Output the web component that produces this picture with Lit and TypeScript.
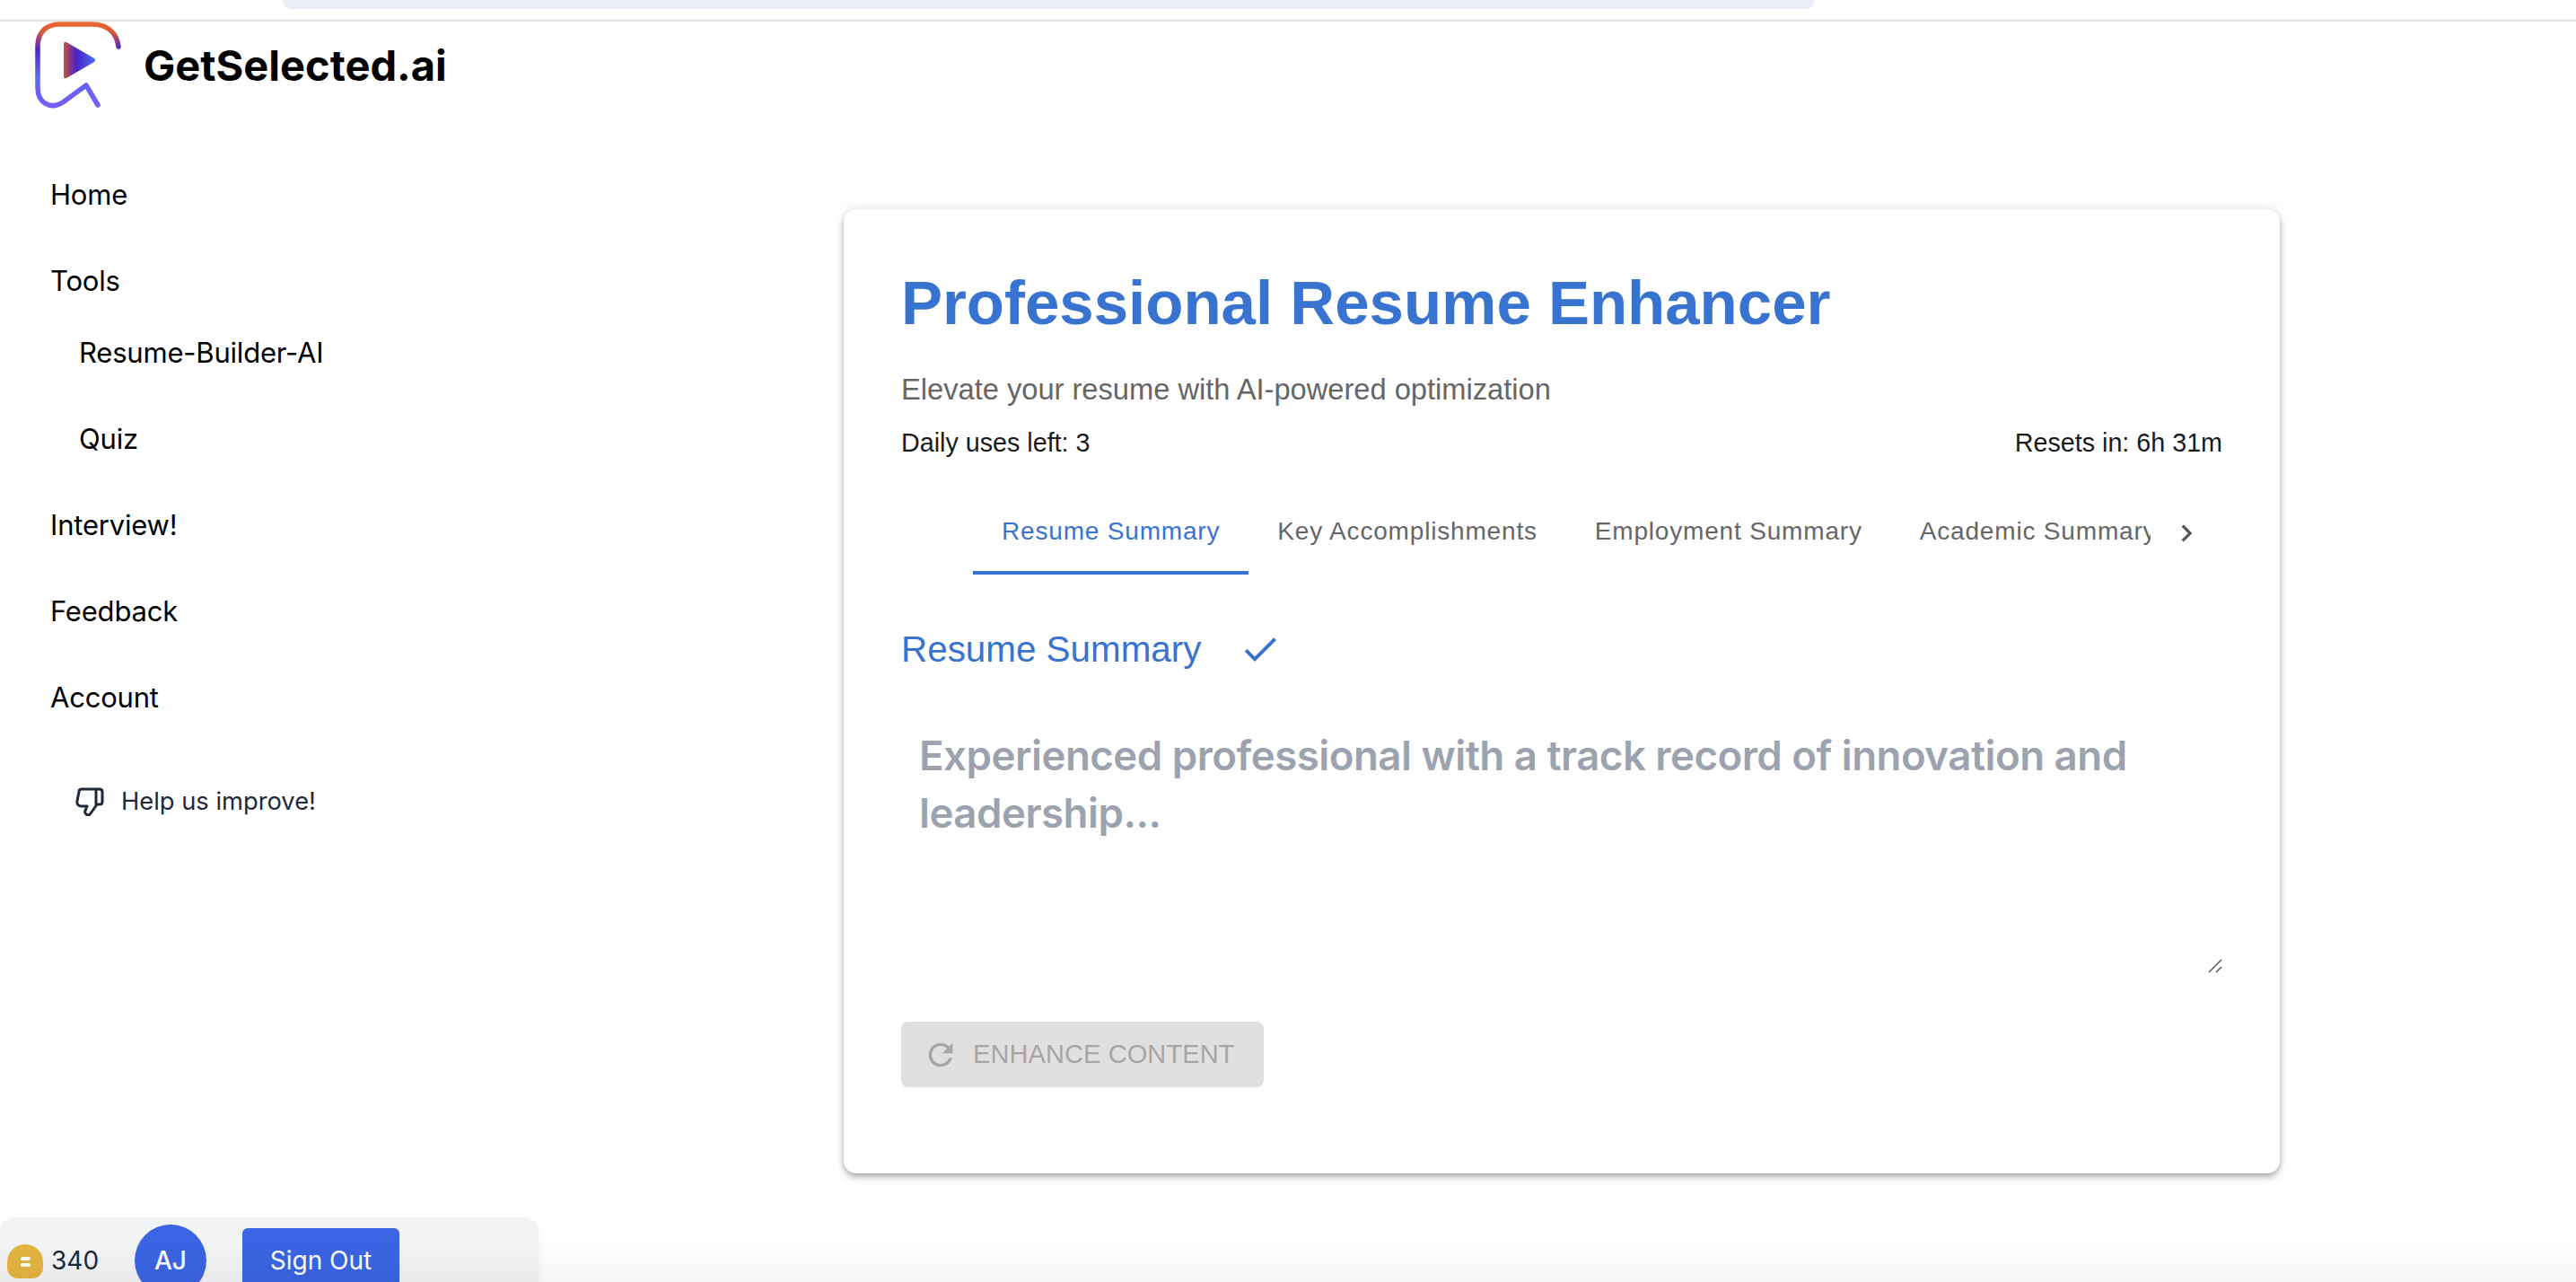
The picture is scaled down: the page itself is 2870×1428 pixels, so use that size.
import { LitElement, html, css } from "lit";
import { customElement } from "lit/decorators.js";

@customElement("app-root")
export class AppRoot extends LitElement {
  static styles = css`
    :host { display: block; width: 2870px; height: 1428px; overflow: hidden; background: #fff; position: relative; font-family: Inter, "Liberation Sans", sans-serif; }
    .fade { position: absolute; left: 0; right: 0; bottom: 0; height: 46px; pointer-events: none; background: linear-gradient(rgba(0,0,0,0), rgba(0,0,0,.04)); }
    .chrome { height: 22px; border-bottom: 2px solid #e2e2e2; display: flex; padding-left: 315px; }
    .pill { width: 1707px; height: 10px; background: #e9edf6; border-radius: 0 0 28px 28px; }
    .page { display: grid; grid-template-columns: 940px 1600px; height: 1404px; }
    .side { display: flex; flex-direction: column; min-height: 0; }
    .brand { display: flex; align-items: center; height: 97px; padding-left: 39px; gap: 23px; }
    .brand svg { display: block; width: 98px; height: 97px; flex: none; }
    .brand b { font-size: 47px; font-weight: 700; color: #000; }
    .nav { display: flex; flex-direction: column; padding: 76px 0 0 56px; }
    .nav a { font-size: 31px; letter-spacing: -0.2px; line-height: 40px; color: #000; height: 96px; display: block; }
    .nav a.sub { margin-left: 32px; }
    .nav a.t { height: 80px; }
    .help { display: flex; align-items: center; gap: 19px; margin: 20px 0 0 84px; font-size: 27.3px; color: #1f2937; line-height: 40px; }
    .help svg { width: 32px; height: 32px; }
    .bar { margin-top: auto; width: 600px; height: 72px; flex: none; background: #f2f3f5; border-radius: 16px 16px 0 0; box-shadow: 0 4px 10px rgba(0,0,0,.05); display: flex; align-items: flex-start; box-sizing: border-box; }
    .coin { width: 40px; height: 38px; border-radius: 20px 20px 12px 12px; background: #e3b440; margin: 30px 0 0 8px; display: flex; flex-direction: column; gap: 3px; align-items: center; justify-content: center; flex: none; }
    .coin i { display: block; width: 11px; height: 4px; background: #fff; border-radius: 2px; }
    .num { font-size: 28px; color: #1f2937; margin: 28px 0 0 9px; line-height: 40px; width: 52px; flex: none; }
    .av { width: 80px; height: 80px; border-radius: 50%; background: #3a64e2; color: #fff; font-size: 28px; font-weight: 500; display: flex; align-items: center; justify-content: center; margin: 8px 0 0 41px; flex: none; }
    .out { width: 175px; height: 72px; background: #3a64e2; color: #fff; border-radius: 6px; font-size: 28px; display: flex; align-items: center; justify-content: center; margin: 12px 0 0 40px; flex: none; }
    .card { margin-top: 209px; width: 1600px; height: 1074px; box-sizing: border-box; padding: 64px; border-radius: 14px; background: #fff; box-shadow: 0 3px 5px -1px rgba(0,0,0,.2), 0 5px 8px rgba(0,0,0,.14), 0 1px 14px rgba(0,0,0,.12); font-family: "Liberation Sans", Arial, sans-serif; display: flex; flex-direction: column; }
    h1 { margin: 1px 0 0; font-size: 69px; line-height: 80px; color: #3873cf; font-weight: 700; }
    .subt { font-size: 32.65px; line-height: 44px; color: #666; margin-top: 34px; }
    .uses { display: flex; justify-content: space-between; font-size: 28.7px; line-height: 36px; color: #1a1a1a; margin-top: 19px; }
    .tabs { display: flex; align-items: stretch; height: 94px; margin: 37px 0 0 80px; }
    .tab { padding: 0 32px; height: 92px; border-bottom: 4px solid transparent; display: flex; align-items: center; font-size: 28px; letter-spacing: 0.82px; color: #666; white-space: nowrap; box-sizing: border-box; }
    .tab.on { color: #3873cf; border-color: #3873cf; }
    .viewport { display: flex; overflow: hidden; width: 1312px; flex: none; }
    .more { width: 80px; height: 92px; display: flex; align-items: center; justify-content: center; flex: none; }
    .more svg { width: 38px; height: 38px; }
    .sec { display: flex; align-items: center; gap: 42px; font-size: 40.4px; color: #3873cf; margin-top: 57px; height: 48px; }
    .sec svg { width: 48px; height: 48px; }
    .ta { position: relative; height: 286px; margin-top: 51px; padding: 12px 20px; font-family: Inter, sans-serif; font-weight: 600; font-size: 45.6px; letter-spacing: -0.5px; line-height: 64px; color: #9ca3af; box-sizing: border-box; }
    .grip { position: absolute; right: 0; bottom: 0; width: 16px; height: 16px; }
    .btn { display: flex; align-items: center; width: 404px; height: 73px; box-sizing: border-box; margin-top: 54px; padding-left: 24px; background: #e0e0e0; border-radius: 8px; color: #a6a6a6; font-size: 29px; letter-spacing: .1px; gap: 16px; }
    .btn svg { width: 40px; height: 40px; flex: none; }
  `;

  render() {
    return html`
      <div class="chrome"><div class="pill"></div></div>
      <div class="page">
        <div class="side">
          <div class="brand">
            <svg viewBox="0 0 98 97" fill="none">
              <defs>
                <linearGradient id="g" gradientUnits="userSpaceOnUse" x1="0" y1="0" x2="0" y2="97">
                  <stop offset="0" stop-color="#ee6a30"/><stop offset=".12" stop-color="#d85a38"/><stop offset=".32" stop-color="#4a22c8"/><stop offset=".62" stop-color="#5a68ee"/><stop offset="1" stop-color="#7a5cf6"/>
                </linearGradient>
                <linearGradient id="p" x1="0" y1="0" x2="1" y2="0">
                  <stop offset="0" stop-color="#c8503c"/><stop offset=".4" stop-color="#4a22c8"/><stop offset="1" stop-color="#4a6eee"/>
                </linearGradient>
              </defs>
              <path d="M93 28C91 12 80 3 64 3H27C12 3 3 13 3 27V74C3 92 19 98 31 90L57 71L70 93" stroke="url(#g)" stroke-width="5.5" stroke-linecap="round" stroke-linejoin="round"/>
              <path d="M35 23L66 41Q68 43 66 45L35 63Q32 64 32 61V25Q32 22 35 23Z" fill="url(#p)"/>
            </svg>
            <b>GetSelected.ai</b>
          </div>
          <nav class="nav">
            <a>Home</a><a class="t">Tools</a><a class="sub">Resume-Builder-AI</a><a class="sub">Quiz</a><a>Interview!</a><a>Feedback</a><a>Account</a>
          </nav>
          <div class="help">
            <svg viewBox="0 0 32 32" fill="none" stroke="#1f2937" stroke-width="3" stroke-linejoin="round" stroke-linecap="round"><path d="M7 2H27Q30 2 30 5V16Q30 19 27 19H24L17 29Q15 32 12 30Q10 28 11 26L13 21H6Q1 20 2 15L4 5Q4 2 7 2Z"/><path d="M23 2V19"/></svg>
            Help us improve!
          </div>
          <div class="bar">
            <div class="coin"><i></i><i></i></div>
            <div class="num">340</div>
            <div class="av">AJ</div>
            <div class="out">Sign Out</div>
          </div>
        </div>
        <main class="card">
          <h1>Professional Resume Enhancer</h1>
          <div class="subt">Elevate your resume with AI-powered optimization</div>
          <div class="uses"><span>Daily uses left: 3</span><span>Resets in: 6h 31m</span></div>
          <div class="tabs">
            <div class="viewport">
              <div class="tab on">Resume Summary</div>
              <div class="tab">Key Accomplishments</div>
              <div class="tab">Employment Summary</div>
              <div class="tab">Academic Summary</div>
            </div>
            <div class="more"><svg viewBox="0 0 24 24" fill="#555"><path d="M10 6 8.59 7.41 13.17 12l-4.58 4.59L10 18l6-6z"/></svg></div>
          </div>
          <div class="sec">Resume Summary
            <svg viewBox="0 0 24 24" fill="#3873cf"><path d="M9 16.2L4.8 12l-1.4 1.4L9 19 21 7l-1.4-1.4z"/></svg>
          </div>
          <div class="ta">Experienced professional with a track record of innovation and leadership...
            <svg class="grip" viewBox="0 0 16 16" stroke="#555" stroke-width="1.5"><path d="M1 15L15 1M9 15L15 9"/></svg>
          </div>
          <div class="btn">
            <svg viewBox="0 0 24 24" fill="#a6a6a6"><path d="M17.65 6.35A7.96 7.96 0 0 0 12 4a8 8 0 1 0 7.73 10h-2.08A6 6 0 1 1 12 6c1.66 0 3.14.69 4.22 1.78L13 11h7V4z"/></svg>
            ENHANCE CONTENT
          </div>
        </main>
      </div>
      <div class="fade"></div>
    `;
  }
}
